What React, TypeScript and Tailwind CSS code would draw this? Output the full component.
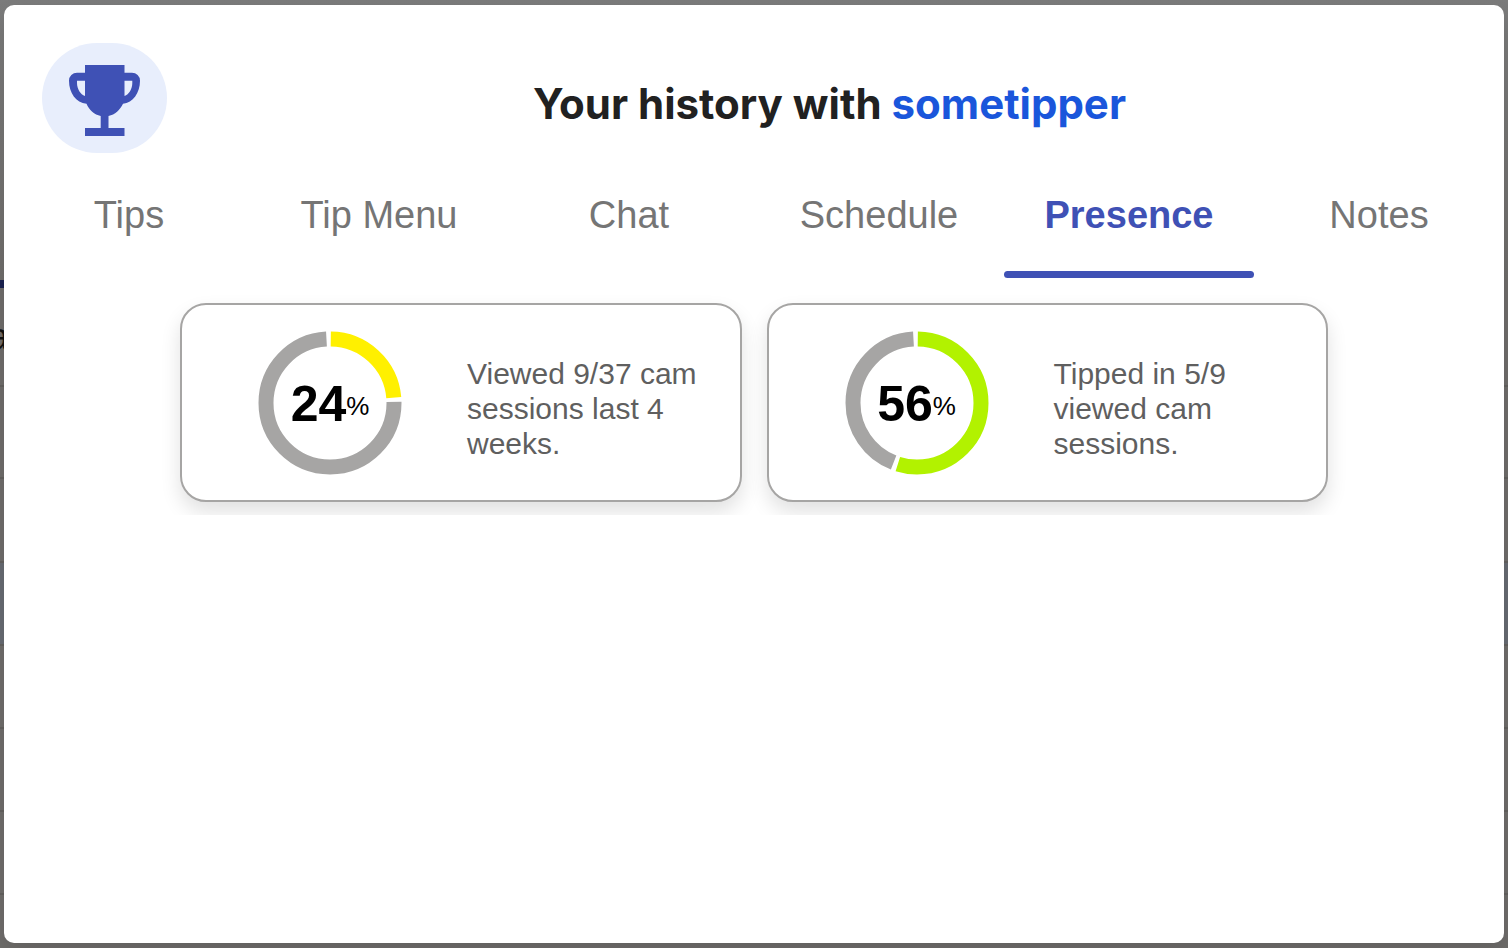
import React, { useState } from "react";
import clsx from "clsx";

const TABS = ["Tips", "Tip Menu", "Chat", "Schedule", "Presence", "Notes"];

const STATS = [
  { percent: 24, ratio: 9 / 37, color: "#fff000", text: "Viewed 9/37 cam sessions last 4 weeks." },
  { percent: 56, ratio: 5 / 9, color: "#b2f200", text: "Tipped in 5/9 viewed cam sessions." },
];

const TrophyIcon: React.FC = () => (
  <svg viewBox="0 0 71 71" className="size-[71px] fill-[#3f51b5]" aria-hidden="true">
    <path
      fillRule="evenodd"
      d="M16 0H55.5V7.7H63a8 8 0 0 1 8 8C71 28 64 37.5 54 38.7C51 45 46 49.500 39.500 51V63H55.500V71H16V63H31.700V51C25.500 49.500 20 45 17.500 38.700C7 37.500 0 28 0 15.700a8 8 0 0 1 8-8H16ZM8 15.700V18C8 24 11.500 29.500 16 31V15.700ZM55.500 15.700V31C60 29.500 63.300 24 63.300 18V15.700Z"
    />
  </svg>
);

const Ring: React.FC<{ percent: number; ratio: number; color: string }> = ({ percent, ratio, color }) => {
  const done = ratio * 100;

  return (
    <div className="relative size-36 shrink-0">
      <svg viewBox="0 0 144 144" className="size-36 -rotate-90" fill="none" strokeWidth="15" aria-hidden="true">
        <circle
          cx="72"
          cy="72"
          r="64"
          stroke="#a6a5a4"
          pathLength="100"
          strokeDasharray={`${98.7 - done} 100`}
          strokeDashoffset={-(done + 0.4)}
        />
        <circle
          cx="72"
          cy="72"
          r="64"
          stroke={color}
          pathLength="100"
          strokeDasharray={`${done - 0.9} 100`}
          strokeDashoffset={-0.2}
        />
      </svg>
      <div className="absolute inset-0 flex items-center justify-center pt-0.5 leading-none text-black">
        <span className="text-[50px] font-bold">{percent}</span>
        <span className="pt-1 text-[26px]">%</span>
      </div>
    </div>
  );
};

// Page behind the dialog, only its edges are visible
const Backdrop: React.FC = () => (
  <div className="absolute inset-0 flex flex-col overflow-hidden bg-[#6e6c6a]" aria-hidden="true">
    <div className="h-[280px] shrink-0 bg-linear-to-b from-[#7b7b7b] to-[#6e6c6a]" />
    <div className="h-2 w-40 shrink-0 bg-[#1b2250]" />
    <div className="-ml-3 flex h-[99px] shrink-0 items-center border-b-2 border-[#62605e] text-[38px] leading-none text-[#111111]">
      a
    </div>
    <div className="h-[92px] shrink-0 border-b-2 border-[#62605e]" />
    <div className="h-[84px] shrink-0 border-b-2 border-[#62605e]" />
    <div className="h-[83px] shrink-0 border-b-2 border-[#62605e] bg-[#666a71]" />
    <div className="h-[83px] shrink-0 border-b-2 border-[#62605e]" />
    <div className="h-[83px] shrink-0 border-b-2 border-[#62605e]" />
    <div className="h-[83px] shrink-0 border-b-2 border-[#62605e]" />
  </div>
);

const App: React.FC = () => {
  const [active, setActive] = useState("Presence");

  return (
    <div className="relative flex min-h-screen flex-col px-1 py-[5px] font-['Liberation_Sans',Arial,sans-serif]">
      <Backdrop />
      <div
        role="dialog"
        aria-labelledby="history-title"
        className="relative flex-1 rounded-[10px] bg-white shadow-[0_10px_20px_rgba(0,0,0,0.1)]"
      >
        <header className="flex items-center pt-[38px] pr-3 pl-[38px]">
          <div className="flex h-[110px] w-[125px] items-center justify-center rounded-[55px] bg-[#e8eefc] pt-1">
            <TrophyIcon />
          </div>
          <h1
            id="history-title"
            className="flex-1 pt-2.5 text-center font-['Inter',sans-serif] text-[42px] font-bold text-[#212121]"
          >
            Your history with{" "}
            <a href="#sometipper" className="text-[#1a56db]">
              sometipper
            </a>
          </h1>
        </header>

        <div role="tablist" className="grid h-[125px] grid-cols-6">
          {TABS.map((tab) => (
            <button
              key={tab}
              type="button"
              role="tab"
              aria-selected={tab === active}
              onClick={() => setActive(tab)}
              className={clsx(
                "relative text-[38px]",
                tab === active ? "font-bold text-[#3f51b5]" : "text-[#757575]"
              )}
            >
              {tab}
              {tab === active && <span className="absolute inset-x-0 bottom-0 h-[7px] rounded-full bg-[#3f51b5]" />}
            </button>
          ))}
        </div>

        <div className="grid grid-cols-2 gap-[25px] overflow-hidden px-44 pt-[25px] pb-[13px]">
          {STATS.map((stat) => (
            <section
              key={stat.percent}
              className="flex h-[199px] items-center gap-[65px] rounded-[26px] border-2 border-[#a6a5a4] bg-white pr-8 pl-[76px] shadow-[0_10px_20px_rgba(0,0,0,0.12)]"
            >
              <Ring percent={stat.percent} ratio={stat.ratio} color={stat.color} />
              <p className="pt-3 text-[30px] leading-[35px] text-[#5f5f5f]">{stat.text}</p>
            </section>
          ))}
        </div>
      </div>
    </div>
  );
};

export default App;
